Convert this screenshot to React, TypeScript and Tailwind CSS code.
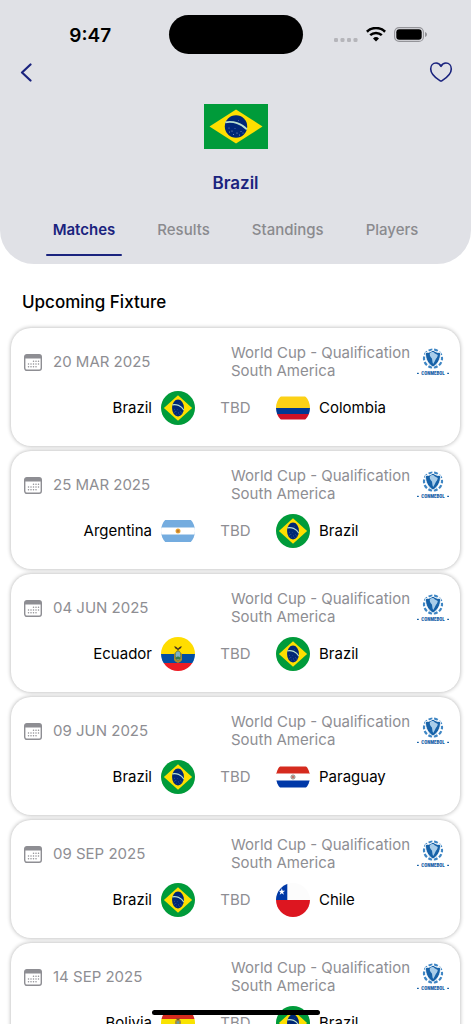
import { useState, type ReactNode } from "react";

type Country =
  | "Brazil"
  | "Colombia"
  | "Argentina"
  | "Ecuador"
  | "Paraguay"
  | "Chile"
  | "Bolivia";

interface Fixture {
  date: string;
  home: Country;
  away: Country;
}

const fixtures: Fixture[] = [
  { date: "20 MAR 2025", home: "Brazil", away: "Colombia" },
  { date: "25 MAR 2025", home: "Argentina", away: "Brazil" },
  { date: "04 JUN 2025", home: "Ecuador", away: "Brazil" },
  { date: "09 JUN 2025", home: "Brazil", away: "Paraguay" },
  { date: "09 SEP 2025", home: "Brazil", away: "Chile" },
  { date: "14 SEP 2025", home: "Bolivia", away: "Brazil" },
];

const tabs = ["Matches", "Results", "Standings", "Players"];

/* Brazil's flag, drawn on a 64 x 45 field. */
function BrazilArt() {
  return (
    <>
      <rect width="64" height="45" fill="#009b3a" />
      <path d="M5.5 22.5 32 5.5 58.5 22.5 32 39.5Z" fill="#fedf00" />
      <circle cx="32" cy="22.5" r="11.2" fill="#002776" />
      <path d="M21.3 18.4C29 16.8 38 19.6 42.9 25.4" fill="none" stroke="#b9e0cf" strokeWidth="1.7" />
      <g fill="#8fa5d0">
        <circle cx="25" cy="24" r=".5" />
        <circle cx="28" cy="27" r=".6" />
        <circle cx="31" cy="24.5" r=".4" />
        <circle cx="33" cy="29" r=".6" />
        <circle cx="37" cy="27.5" r=".5" />
        <circle cx="29.5" cy="30.5" r=".5" />
        <circle cx="35.5" cy="31" r=".5" />
        <circle cx="25.5" cy="28" r=".5" />
        <circle cx="39" cy="29" r=".5" />
        <circle cx="34.5" cy="16.5" r=".4" />
      </g>
    </>
  );
}

const flagArt: Record<Country, ReactNode> = {
  Brazil: (
    <svg width="34" height="34" viewBox="0 0 64 45" preserveAspectRatio="none">
      <BrazilArt />
    </svg>
  ),
  Colombia: (
    <>
      <path d="M0 5.5h34V17H0z" fill="#fcd116" />
      <path d="M0 17h34v6H0z" fill="#003893" />
      <path d="M0 23h34v5.5H0z" fill="#ce1126" />
    </>
  ),
  Argentina: (
    <>
      <path d="M0 6h34v22H0z" fill="#74acdf" />
      <path d="M0 13.5h34v7H0z" fill="#fff" />
      <circle cx="17" cy="17" r="2.5" fill="#e9a93a" />
      <circle cx="17" cy="17" r="1.5" fill="#c57c2a" />
    </>
  ),
  Ecuador: (
    <>
      <path d="M0 0h34v17H0z" fill="#ffdd00" />
      <path d="M0 17h34v9H0z" fill="#034ea2" />
      <path d="M0 26h34v8H0z" fill="#ed1c24" />
      <path d="M13 16.5h8v6c0 1.500-2 2.500-4 3.500-2-1-4-2-4-3.500z" fill="#a98c2d" />
      <ellipse cx="17" cy="18.5" rx="2.8" ry="4.5" fill="#7fb2c4" stroke="#5b6b27" strokeWidth=".7" />
      <path d="M14.8 20.500q2.200-2 4.400 0v1.500h-4.400z" fill="#2f7a4a" />
      <path d="M13.200 9.300c1.800.2 2.800 1 3.800 2.300 1-1.300 2-2.100 3.800-2.300-.5 2-1.700 2.800-3 3.200l-.8 1.500-.8-1.500c-1.300-.4-2.500-1.200-3-3.200z" fill="#453421" />
    </>
  ),
  Paraguay: (
    <>
      <path d="M0 6.5h34V14H0z" fill="#d52b1e" />
      <path d="M0 13.5h34v7H0z" fill="#fff" />
      <path d="M0 20.5h34v7H0z" fill="#0038a8" />
      <circle cx="17" cy="17" r="2.1" fill="#c4bfb3" stroke="#858076" strokeWidth=".8" />
      <circle cx="17" cy="17" r=".9" fill="#c0504a" />
    </>
  ),
  Chile: (
    <>
      <path d="M0 0h34v17H0z" fill="#fcfcfc" />
      <path d="M0 0h11.3v17H0z" fill="#0039a6" />
      <path d="M0 17h34v17H0z" fill="#dd1620" />
      <path d="m5.8 5.300.8 2.400h2.500L7.100 9.200l.8 2.500-2.100-1.500-2.100 1.500.8-2.500-2-1.500H5z" fill="#fff" />
    </>
  ),
  Bolivia: (
    <>
      <path d="M0 5.5h34V13H0z" fill="#d52b1e" />
      <path d="M0 13h34v8H0z" fill="#f9e300" />
      <path d="M0 21h34v7.5H0z" fill="#007934" />
      <ellipse cx="17" cy="16.5" rx="3" ry="3.2" fill="#a98b3c" />
      <path d="M14.5 12.5h5l-2.500 2z" fill="#6d4f2b" />
      <circle cx="17" cy="16.5" r="1.3" fill="#5b9fb5" />
    </>
  ),
};

function RoundFlag({ country }: { country: Country }) {
  return (
    <svg className="size-[34px] shrink-0 rounded-full" viewBox="0 0 34 34" aria-hidden="true">
      {flagArt[country]}
    </svg>
  );
}

function CalendarIcon() {
  const dots = [
    [9.5, 7.2], [12, 7.2], [14.5, 7.2],
    [4.5, 10], [7, 10], [9.5, 10], [12, 10], [14.5, 10],
    [4.5, 12.8], [7, 12.8], [9.5, 12.8], [12, 12.8],
  ];
  return (
    <svg className="h-[17px] w-[18px] shrink-0" viewBox="0 0 18 17" fill="none" aria-hidden="true">
      <rect x=".7" y=".7" width="16.6" height="15.6" rx="2.2" stroke="#8e8e93" strokeWidth="1.4" />
      <path d="M.7 4.600V2.900C.7 1.600 1.600.7 2.900.7h12.200c1.300 0 2.200.9 2.200 2.200v1.700z" fill="#8e8e93" />
      {dots.map(([x, y]) => (
        <circle key={`${x}-${y}`} cx={x} cy={y} r=".75" fill="#8e8e93" />
      ))}
    </svg>
  );
}

function ConmebolLogo() {
  return (
    <svg className="h-8 w-8 shrink-0" viewBox="0 0 32 32" role="img" aria-label="CONMEBOL">
      <circle cx="16" cy="12.5" r="9" fill="none" stroke="#3f86c4" strokeWidth="2.2" strokeDasharray="3.9 1.755" strokeDashoffset="2" />
      <path d="M8.500 6.500c3 .3 4.800-.6 7.500-2.300 2.700 1.700 4.500 2.600 7.500 2.300.3 6.500-2.500 11.500-7.500 14.500-5-3-7.800-8-7.500-14.500z" fill="#1762a8" stroke="#fff" strokeWidth=".8" />
      <path d="M13 6.900c1.900-1.400 3.700-1 4.600.3l3.200 1.700c-.3 2.400-1.600 3.100-2.200 4.500-.6 1.700-1.500 2.900-2.400 4.600-1-1.700-.8-3.900-1.300-5.600-1.500-1.400-2.700-3.500-1.900-5.500z" fill="#a9cde9" />
      <g fill="#1762a8">
        <rect x="0" y="26.8" width="1.8" height="1.2" />
        <rect x="30.2" y="26.8" width="1.8" height="1.2" />
        <text
          x="16"
          y="29.4"
          textAnchor="middle"
          className="font-['Roboto_Condensed','Roboto',sans-serif] text-[5px] font-black"
        >
          CONMEBOL
        </text>
      </g>
    </svg>
  );
}

function StatusBar() {
  return (
    <div className="grid h-[54px] grid-cols-[1fr_auto_1fr] items-end">
      <time className="flex h-[39px] items-center justify-center pt-[3px] pl-3 text-[19px] font-semibold">9:47</time>
      <div className="h-[39px] w-[134px] rounded-full bg-black" />
      <div className="flex h-[39px] items-center justify-center gap-2 pr-3">
        <svg className="h-4 w-6" viewBox="0 0 24 16" fill="#b5b5ba" aria-hidden="true">
          <rect x="0" y="11" width="4" height="4" rx="1.3" />
          <rect x="6.5" y="11" width="4" height="4" rx="1.3" />
          <rect x="13" y="11" width="4" height="4" rx="1.3" />
          <rect x="19.5" y="11" width="4" height="4" rx="1.3" />
        </svg>
        <svg className="h-[15px] w-5" viewBox="0 0 20 15" fill="none" stroke="#000" aria-hidden="true">
          <path d="M.9 4.700a13.200 13.200 0 0 1 18.200 0" strokeWidth="2.6" />
          <path d="M4.200 8.200a8.500 8.500 0 0 1 11.600 0" strokeWidth="2.5" />
          <path d="M10 14.500 7 11.400a4.500 4.500 0 0 1 6 0z" fill="#000" stroke="none" />
        </svg>
        <svg className="h-[15px] w-[33px]" viewBox="0 0 33 15" aria-hidden="true">
          <rect x=".6" y=".6" width="28.8" height="13.8" rx="4.5" fill="none" stroke="#949499" strokeWidth="1.1" />
          <rect x="2.3" y="2.3" width="25.4" height="10.4" rx="2.9" />
          <path d="M31 5v5c1.300-.5 2-1.400 2-2.500S32.300 5.500 31 5z" fill="#949499" />
        </svg>
      </div>
    </div>
  );
}

function FixtureCard({ date, home, away }: Fixture) {
  return (
    <li className="flex h-[118px] shrink-0 flex-col rounded-[20px] bg-white px-[11px] pt-4 shadow-[0_0_4px_rgba(0,0,0,0.32)]">
      <div className="flex h-9 items-center justify-between pl-[2px] text-[15px] leading-[18px] text-[#8e8e93]">
        <div className="flex items-center gap-[11px]">
          <CalendarIcon />
          <time>{date}</time>
        </div>
        <div className="flex items-center gap-3">
          <p className="w-[174px] whitespace-nowrap">
            World Cup - Qualification
            <br />
            South America
          </p>
          <ConmebolLogo />
        </div>
      </div>
      <div className="mt-[11px] grid grid-cols-[1fr_81px_1fr] items-center text-[15px] text-black">
        <div className="flex items-center justify-end gap-[9px]">
          {home}
          <RoundFlag country={home} />
        </div>
        <span className="text-center text-[#8e8e93]">TBD</span>
        <div className="flex items-center gap-[9px]">
          <RoundFlag country={away} />
          {away}
        </div>
      </div>
    </li>
  );
}

export default function App() {
  const [active, setActive] = useState("Matches");
  const [liked, setLiked] = useState(false);

  return (
    <div className="relative flex h-screen flex-col overflow-hidden bg-white font-['Inter',sans-serif] text-black">
      <header className="shrink-0 rounded-b-[34px] bg-[#e0e1e6] text-[#1a237e]">
        <div className="text-black">
          <StatusBar />
        </div>
        <div className="flex h-9 items-center justify-between px-[18px]">
          <button type="button" aria-label="Back" className="flex size-4 items-center justify-center">
            <svg className="h-[19px] w-3 shrink-0" viewBox="0 0 12 19" fill="none" stroke="currentColor" strokeWidth="2.2" strokeLinecap="round" strokeLinejoin="round">
              <path d="M10.500 1.500 2 9.500l8.500 8" />
            </svg>
          </button>
          <button type="button" aria-label="Favourite" aria-pressed={liked} onClick={() => setLiked(!liked)}>
            <svg className="h-5 w-6" viewBox="0 0 24 20" fill={liked ? "currentColor" : "none"} stroke="currentColor" strokeWidth="1.6" strokeLinejoin="round">
              <path d="M12 4.300C10.900 2.100 9.200 1 7.100 1 3.900 1 1.700 3.500 1.700 6.900c0 4.700 4.500 8.700 9.200 11.700.7.500 1.500.5 2.200 0 4.700-3 9.200-7 9.200-11.700C22.300 3.500 20.100 1 16.900 1c-2.100 0-3.800 1.100-4.900 3.300z" />
            </svg>
          </button>
        </div>
        <div className="flex flex-col items-center pt-[14px]">
          <svg className="h-[45px] w-16" viewBox="0 0 64 45" role="img" aria-label="Flag of Brazil">
            <BrazilArt />
          </svg>
          <h1 className="mt-[22px] text-[17px] leading-6 font-semibold">Brazil</h1>
        </div>
        <nav className="mt-[9px] flex justify-center gap-7 pb-2">
          {tabs.map((tab) => (
            <button
              key={tab}
              type="button"
              onClick={() => setActive(tab)}
              className={`flex h-[52px] flex-col items-center justify-end text-[15px] leading-5 ${active === tab ? "font-semibold text-[#1a237e]" : "font-medium text-[#8a8a8e]"}`}
            >
              <span className="px-[7px] pb-[14px]">{tab}</span>
              <span className={`h-[2px] w-full rounded-full ${active === tab ? "bg-[#1a237e]" : "bg-transparent"}`} />
            </button>
          ))}
        </nav>
      </header>

      <main className="flex min-h-0 flex-1 flex-col">
        <h2 className="px-[22px] pt-[26px] text-[17px] leading-6 font-medium">Upcoming Fixture</h2>
        <ul className="flex min-h-0 flex-1 flex-col gap-[5px] overflow-y-auto px-[11px] pt-[14px] [scrollbar-width:none]">
          {fixtures.map((fixture) => (
            <FixtureCard key={fixture.date} {...fixture} />
          ))}
        </ul>
      </main>

      <div className="absolute bottom-[9px] left-1/2 h-[5px] w-[168px] -translate-x-1/2 rounded-full bg-black" />
    </div>
  );
}
